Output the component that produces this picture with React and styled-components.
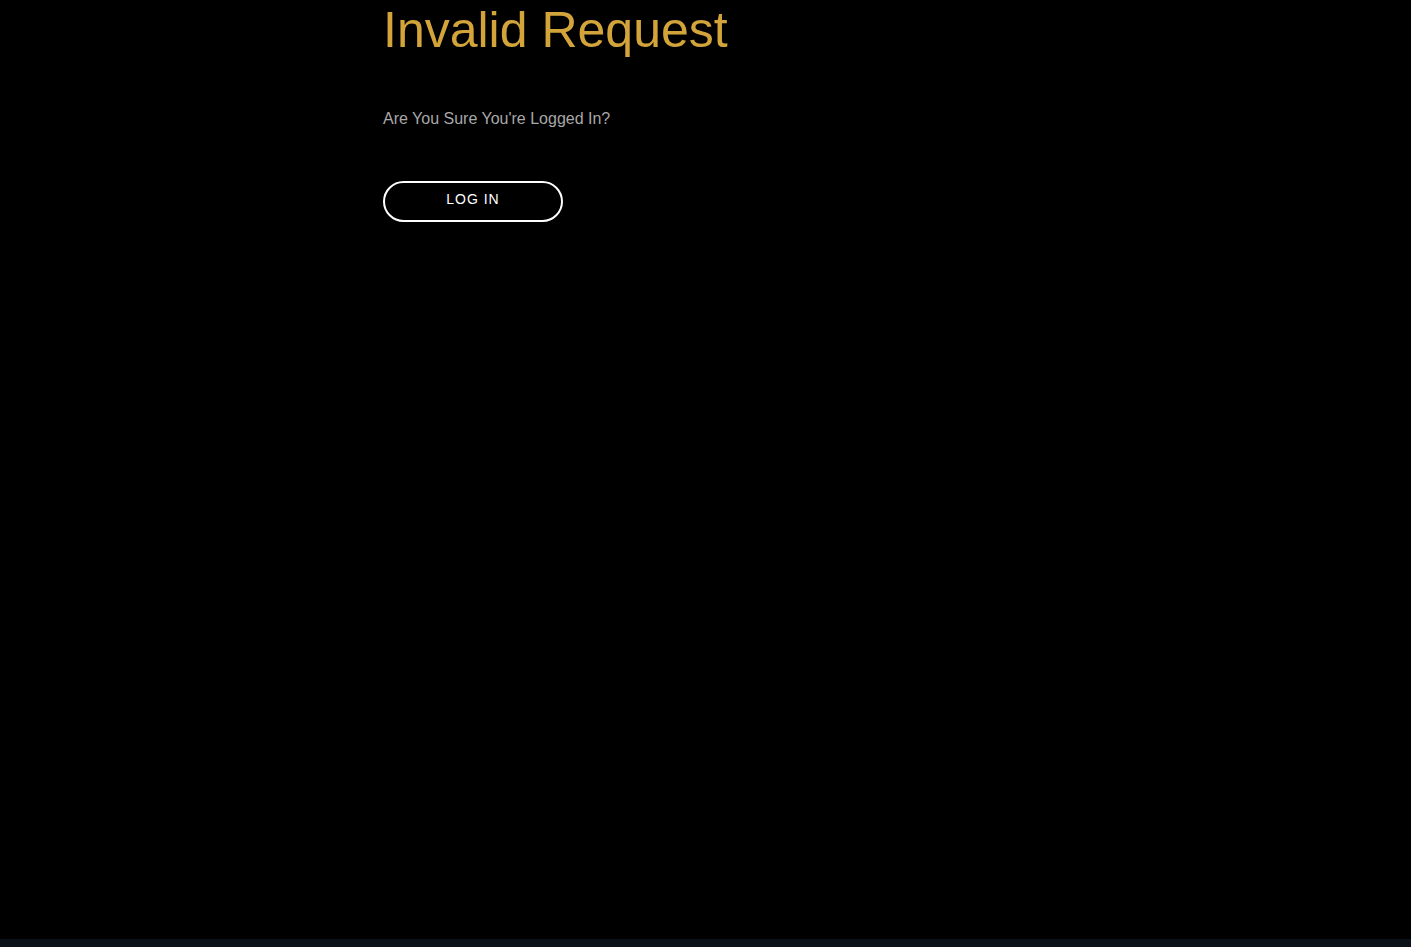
import styled, { createGlobalStyle } from 'styled-components';

const GlobalStyle = createGlobalStyle`
  html, body {
    margin: 0;
    padding: 0;
    background: #0b1219;
    font-family: "Liberation Sans", Arial, sans-serif;
  }
`;

const Page = styled.div`
  background: #000;
  min-height: 939px;
`;

const Content = styled.main`
  width: 645px;
  margin: 0 auto;
  padding-top: 2px;
  display: flex;
  flex-direction: column;
  align-items: flex-start;
`;

const Title = styled.h1`
  margin: 0;
  font-size: 50px;
  font-weight: 400;
  line-height: 57px;
  color: #d2a43a;
`;

const Message = styled.p`
  margin: 51px 0 0;
  font-size: 16px;
  line-height: 18px;
  color: #a8a8a8;
`;

const LoginButton = styled.button`
  margin-top: 53px;
  width: 180px;
  height: 41px;
  border: 2px solid #fff;
  border-radius: 21px;
  background: transparent;
  color: #fff;
  font-family: "Liberation Sans", Arial, sans-serif;
  font-size: 14px;
  letter-spacing: 1px;
  text-transform: uppercase;
  padding: 0 0 5px;
  cursor: pointer;
`;

export default function App() {
  return (
    <>
      <GlobalStyle />
      <Page>
        <Content>
          <Title>Invalid Request</Title>
          <Message>Are You Sure You're Logged In?</Message>
          <LoginButton>Log In</LoginButton>
        </Content>
      </Page>
    </>
  );
}
